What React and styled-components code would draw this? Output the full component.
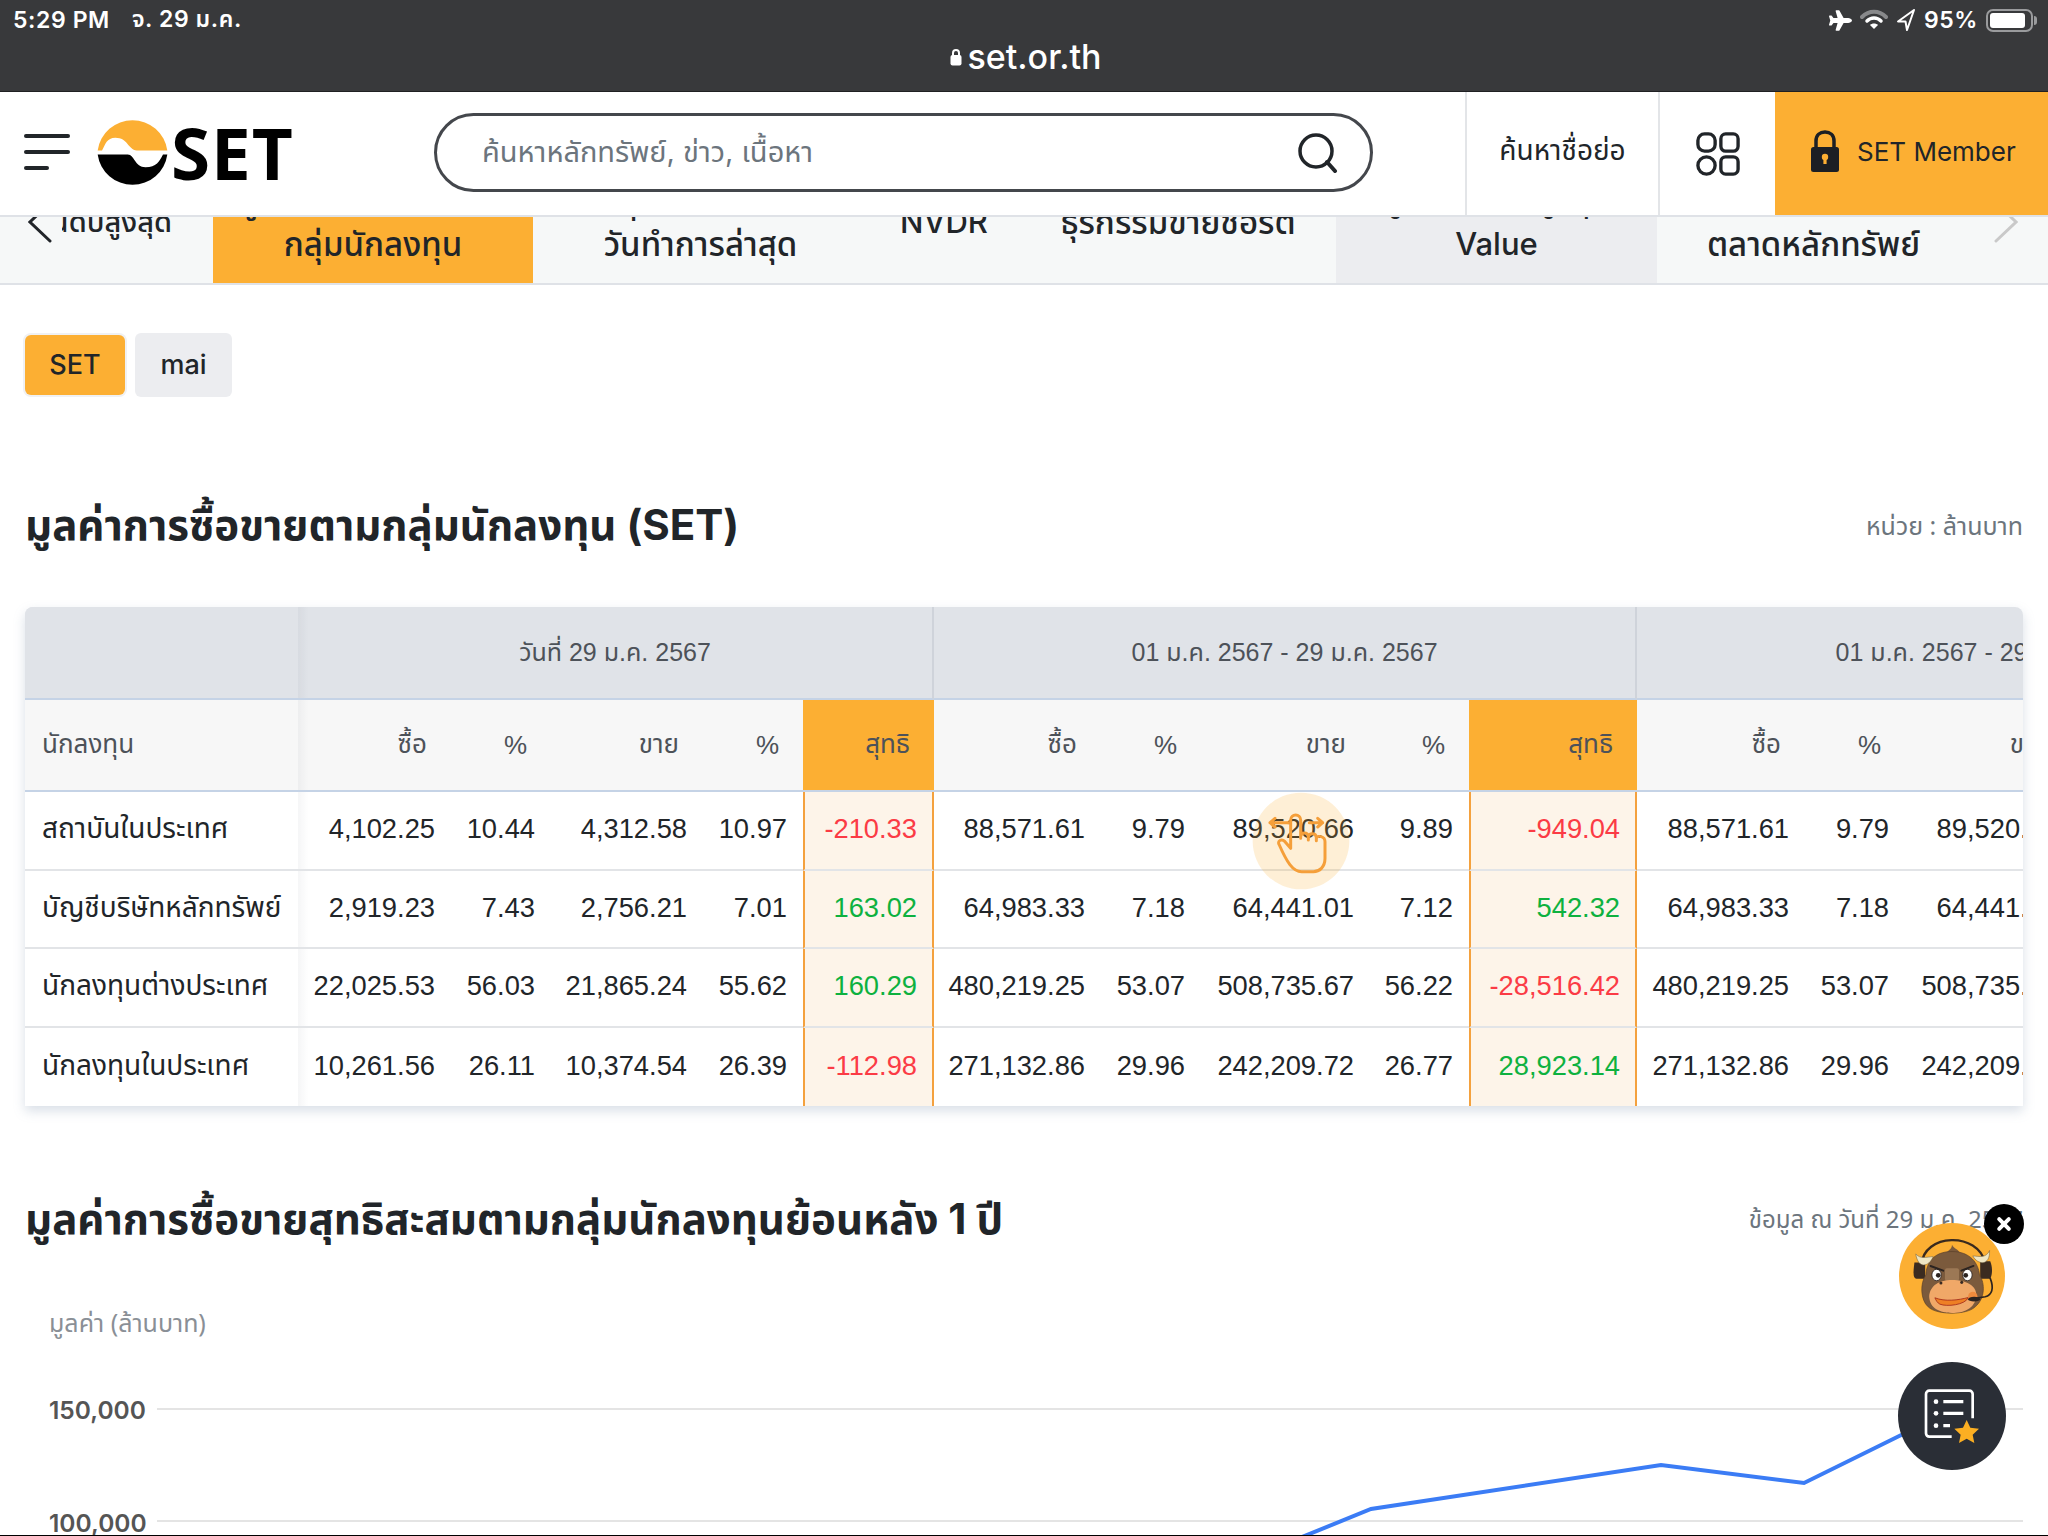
import React from 'react';
import styled, { createGlobalStyle } from 'styled-components';
import { FaPlane } from 'react-icons/fa';

const GlobalStyle = createGlobalStyle`
  html, body { margin: 0; padding: 0; background: #fff; }
  body { font-family: Inter, "Noto Sans Thai", "Noto Sans", sans-serif; color: #212529; }
  * { box-sizing: border-box; }
`;

const ORANGE = '#fcaf33';

const TABS = [
  { w: 320, label: ['20 อันดับสูงสุด'], end: true, size: 29 },
  { w: 320, label: ['มูลค่าการซื้อขายตาม', 'กลุ่มนักลงทุน'], active: true },
  { w: 335, label: ['สรุปการซื้อขาย', 'วันทำการล่าสุด'] },
  { w: 152, label: ['NVDR'], size: 31 },
  { w: 316, label: ['ธุรกรรมขายชอร์ต'] },
  { w: 321, label: ['มูลค่าซื้อขายสูงสุด', 'Value'], muted: true, size: 31 },
  { w: 313, label: ['ภาวะการซื้อขาย', 'ตลาดหลักทรัพย์'] },
];

const COLS = [273, 153, 100, 152, 100, 131, 167, 100, 169, 99, 168, 168, 100, 169, 100, 168];
const TABLE_W = COLS.reduce((a, b) => a + b, 0);

const ROWS = [
  {
    name: 'สถาบันในประเทศ',
    a: ['4,102.25', '10.44', '4,312.58', '10.97', '-210.33'],
    b: ['88,571.61', '9.79', '89,520.66', '9.89', '-949.04'],
  },
  {
    name: 'บัญชีบริษัทหลักทรัพย์',
    a: ['2,919.23', '7.43', '2,756.21', '7.01', '163.02'],
    b: ['64,983.33', '7.18', '64,441.01', '7.12', '542.32'],
  },
  {
    name: 'นักลงทุนต่างประเทศ',
    a: ['22,025.53', '56.03', '21,865.24', '55.62', '160.29'],
    b: ['480,219.25', '53.07', '508,735.67', '56.22', '-28,516.42'],
  },
  {
    name: 'นักลงทุนในประเทศ',
    a: ['10,261.56', '26.11', '10,374.54', '26.39', '-112.98'],
    b: ['271,132.86', '29.96', '242,209.72', '26.77', '28,923.14'],
  },
];

const GROUPS = ['วันที่ 29 ม.ค. 2567', '01 ม.ค. 2567 - 29 ม.ค. 2567', '01 ม.ค. 2567 - 29 ม.ค. 2567'];

const Page = styled.div`
  position: relative;
  width: 2048px;
  height: 1536px;
  overflow: hidden;
  display: flex;
  flex-direction: column;
  background: #fff;
  border-bottom: 1px solid #000;
`;

const BrowserBar = styled.div`
  height: 92px;
  flex: none;
  background: #38393b;
  border-bottom: 1px solid #1f2022;
  color: #fff;
  display: flex;
  flex-direction: column;
`;

const StatusRow = styled.div`
  height: 40px;
  padding: 0 10px 0 13px;
  display: flex;
  justify-content: space-between;
  align-items: center;
  font-size: 23px;
  font-weight: 600;
  letter-spacing: 0.6px;
`;

const StatusGroup = styled.div`
  display: flex;
  align-items: center;
  gap: ${p => p.$gap || 22}px;
`;

const Battery = styled.div`
  width: 47px;
  height: 23px;
  border: 2px solid #9a9b9d;
  border-radius: 7px;
  padding: 2px;
  margin-right: 5px;
  position: relative;
  &::before {
    content: '';
    display: block;
    width: 90%;
    height: 100%;
    background: #fff;
    border-radius: 3px;
  }
  &::after {
    content: '';
    position: absolute;
    right: -6px;
    top: 5px;
    width: 3px;
    height: 9px;
    background: #9a9b9d;
    border-radius: 0 3px 3px 0;
  }
`;

const UrlRow = styled.div`
  display: flex;
  justify-content: center;
  align-items: center;
  gap: 5px;
  padding-left: 4px;
  font-size: 34px;
  font-weight: 500;
  line-height: 34px;
`;

const SiteHeader = styled.header`
  position: relative;
  z-index: 2;
  flex: none;
  height: 125px;
  background: #fff;
  border-bottom: 2px solid #dfe2e7;
  display: flex;
  align-items: stretch;
`;

const Burger = styled.div`
  width: 46px;
  margin: 42px 0 0 24px;
  height: 36px;
  display: flex;
  flex-direction: column;
  justify-content: space-between;
`;

const BurgerLine = styled.span`
  display: block;
  height: 4px;
  border-radius: 2px;
  width: ${p => p.$w}px;
  background: #212529;
`;

const Logo = styled.div`
  display: flex;
  align-items: center;
  margin-left: 27px;
  width: 337px;
  padding-bottom: 3px;
`;

const LogoText = styled.span`
  font-family: "Open Sans", sans-serif;
  font-weight: 700;
  font-size: 71px;
  line-height: 1;
  color: #000;
  margin-left: 3px;
  letter-spacing: 1px;
`;

const Search = styled.div`
  width: 939px;
  height: 79px;
  margin-top: 21px;
  border: 3px solid #44474c;
  border-radius: 40px;
  display: flex;
  align-items: center;
  justify-content: space-between;
  padding: 0 32px 0 45px;
  font-size: 29px;
  color: #6c757d;
`;

const NavCell = styled.div`
  display: flex;
  align-items: center;
  justify-content: center;
  width: ${p => p.$w}px;
  border-left: ${p => (p.$line ? '2px solid #e3e5e8' : 'none')};
  font-size: 28px;
  padding-bottom: ${p => p.$pad || 0}px;
`;

const MemberCell = styled.div`
  flex: 1;
  background: ${ORANGE};
  display: flex;
  align-items: center;
  gap: 17px;
  padding: 0 0 5px 35px;
  font-size: 26px;
  color: #212529;
`;

const TabStrip = styled.nav`
  position: relative;
  z-index: 1;
  flex: none;
  height: 114px;
  margin-top: -46px;
  background: #f6f8f8;
  border-bottom: 2px solid #dfe2e7;
  overflow: hidden;
`;

const TabTrack = styled.div`
  display: flex;
  height: 100%;
  margin-left: -107px;
`;

const Tab = styled.div`
  flex: none;
  width: ${p => p.$w}px;
  display: flex;
  flex-direction: column;
  align-items: ${p => (p.$end ? 'flex-end' : 'center')};
  justify-content: center;
  padding: ${p => (p.$end ? '0 41px 10px 0' : '0 0 10px')};
  font-size: ${p => p.$size || 33}px;
  font-weight: 500;
  line-height: 44px;
  white-space: nowrap;
  background: ${p => (p.$active ? ORANGE : p.$muted ? '#ecedf0' : 'transparent')};
`;

const TabArrow = styled.div`
  position: absolute;
  top: 0;
  bottom: 0;
  width: 62px;
  background: #f6f8f8;
  padding-top: 30px;
  ${p => (p.$side === 'left' ? 'left: 0; padding-left: 28px;' : 'right: 0; padding-left: 8px; background: transparent;')}
`;

const Main = styled.main`
  flex: 1;
  min-height: 0;
  padding: 48px 25px 0;
  display: flex;
  flex-direction: column;
`;

const Markets = styled.div`
  display: flex;
  gap: 10px;
  align-items: center;
`;

const MarketButton = styled.div`
  display: flex;
  align-items: center;
  justify-content: center;
  width: ${p => p.$w}px;
  height: ${p => (p.$active ? 60 : 64)}px;
  padding-bottom: 2px;
  border-radius: 6px;
  font-size: 27px;
  font-weight: 500;
  background: ${p => (p.$active ? ORANGE : '#ecedf0')};
  box-shadow: ${p => (p.$active ? '0 0 0 2px #f0f1f3' : 'none')};
`;

const SectionHead = styled.div`
  display: flex;
  justify-content: space-between;
  align-items: center;
  height: 60px;
  margin-top: ${p => p.$top}px;
`;

const Title = styled.h2`
  margin: 0;
  font-size: 42px;
  font-weight: 700;
  color: #212529;
  white-space: nowrap;
`;

const Note = styled.span`
  font-family: "Noto Sans Thai", "Noto Sans", sans-serif;
  font-size: ${p => p.$size}px;
  color: #6c757d;
  white-space: nowrap;
`;

const TableCard = styled.div`
  margin-top: 50px;
  height: 499px;
  flex: none;
  border-radius: 8px 8px 0 0;
  overflow: hidden;
  box-shadow: 0 5px 12px rgba(120, 140, 170, 0.28);
`;

const Table = styled.table`
  width: ${TABLE_W}px;
  table-layout: fixed;
  border-collapse: separate;
  border-spacing: 0;
  font-family: "Liberation Sans", "Noto Sans Thai", sans-serif;
  font-size: 27.3px;
`;

const StickyCell = styled.td`
  position: sticky;
  left: 0;
  z-index: 1;
  background: inherit;
  text-align: left;
  padding-left: 17px;
  white-space: nowrap;
  &::after {
    content: '';
    position: absolute;
    top: 0;
    bottom: 0;
    right: -10px;
    width: 10px;
    background: linear-gradient(to right, rgba(60, 70, 90, 0.05), rgba(60, 70, 90, 0));
  }
`;

const NameCell = styled(StickyCell)`
  font-size: 28px;
  padding-bottom: 2px;
`;

const GroupRow = styled.tr`
  height: 93px;
  background: #e0e3e8;
  td {
    border-bottom: 2px solid #c5d3e6;
  }
`;

const GroupCell = styled.td`
  text-align: center;
  color: #4d5259;
  font-size: 25px;
  border-right: 2px solid #cfd3da;
  white-space: nowrap;
  overflow: hidden;
`;

const LabelRow = styled.tr`
  height: 92px;
  background: #f7f7f7;
  color: #4d5259;
  font-size: 26px;
  td {
    border-bottom: 2px solid #c5d3e6;
  }
`;

const LabelCell = styled.td`
  text-align: right;
  padding-right: 24px;
  white-space: nowrap;
  ${p => p.$net && `background: ${ORANGE};`}
`;

const DataRow = styled.tr`
  height: 78.5px;
  background: #fff;
  td {
    border-bottom: 2px solid #e2e4e7;
  }
  &:last-child td {
    border-bottom: none;
  }
`;

const NumCell = styled.td`
  text-align: right;
  padding: 0 16px 2px 0;
  white-space: nowrap;
  overflow: hidden;
`;

const NetCell = styled.td`
  text-align: right;
  padding: 0 15px 2px 0;
  white-space: nowrap;
  background: #fdf4e9;
  border-left: 2px solid #f4a13e;
  border-right: 2px solid #f4a13e;
  color: ${p => (p.$neg ? '#fb3b45' : '#0eb13f')};
`;

const ChartLabel = styled.div`
  margin: 54px 0 0 24px;
  font-family: "Noto Sans Thai", sans-serif;
  font-size: 25px;
  color: #8a8f96;
  white-space: nowrap;
`;

const ChartSvg = styled.svg`
  display: block;
  width: 1998px;
  height: 220px;
  flex: none;
`;

const SwipeHint = styled.svg`
  position: absolute;
  left: 1220px;
  top: 780px;
  pointer-events: none;
`;

const FloatCircle = styled.div`
  position: absolute;
  left: ${p => p.$x - p.$r}px;
  top: ${p => p.$y - p.$r}px;
  width: ${p => p.$r * 2}px;
  height: ${p => p.$r * 2}px;
  border-radius: 50%;
  background: ${p => p.$bg};
  display: flex;
  align-items: center;
  justify-content: center;
`;

const StatusIcons = () => (
  <>
    <FaPlane size={23} color="#fff" />
    <svg width="28" height="24" viewBox="0 0 28 24" fill="none" strokeLinecap="round">
      <path d="M2 9C9 2 19 2 26 9" stroke="#88898b" strokeWidth="4" />
      <path d="M7 13C11 9 17 9 21 13" stroke="#fff" strokeWidth="3.5" />
      <path d="M14 21L10 17C12 15 16 15 18 17Z" fill="#fff" />
    </svg>
    <svg width="20" height="24" viewBox="0 0 20 24" fill="none">
      <path d="M18 2L2 13.5H9.5L11 22Z" stroke="#fff" strokeWidth="2" strokeLinejoin="round" />
    </svg>
  </>
);

const LogoMark = () => (
  <svg width="71" height="71" viewBox="293 53 212 212">
    <path d="M295 153A105 105 0 0 1 503 153L412 153C385 150 385 115 348 115C322 115 318 135 308 153Z" fill="#fcaf33" />
    <path d="M295 165L385 165C405 165 405 203 438 203C470 203 480 185 490 165L503 165A105 105 0 0 1 295 165Z" fill="#000" />
  </svg>
);

const SearchIcon = () => (
  <svg width="40" height="40" viewBox="0 0 40 40" fill="none" stroke="#212529" strokeLinecap="round">
    <circle cx="18" cy="18" r="16" strokeWidth="3.5" />
    <path d="M29 29L37 38" strokeWidth="4" />
  </svg>
);

const GridIcon = () => (
  <svg width="44" height="44" viewBox="0 0 46 46" fill="none" stroke="#212529" strokeWidth="3.5">
    <rect x="2" y="2" width="18" height="18" rx="7" />
    <rect x="26" y="2" width="18" height="18" rx="5" />
    <rect x="2" y="26" width="18" height="18" rx="9" />
    <rect x="26" y="26" width="18" height="18" rx="5" />
  </svg>
);

const LockIcon = () => (
  <svg width="30" height="42" viewBox="0 0 30 42">
    <path d="M6 20V11C6 5 10 2 15 2C20 2 24 5 24 11V20" fill="none" stroke="#1c1f24" strokeWidth="3.5" />
    <rect x="1" y="17" width="28" height="25" rx="2.5" fill="#1c1f24" />
    <circle cx="15" cy="27" r="3.2" fill="#fcaf33" />
    <rect x="13.4" y="27" width="3.2" height="7" fill="#fcaf33" />
  </svg>
);

const Cow = () => (
  <svg width="106" height="106" viewBox="28 70 316 316">
    <path d="M95 195C100 100 265 95 285 190" fill="none" stroke="#3a2a1e" strokeWidth="7" />
    <path d="M74 188H106V236H80C72 236 70 225 72 205Z" fill="#3b2b20" />
    <path d="M270 184H300C307 200 307 225 300 236H270Z" fill="#3b2b20" />
    <path d="M170 160C175 150 185 150 186 135C192 148 205 148 210 160Z" fill="#7b5a3c" />
    <path d="M186 155C130 155 110 190 108 225C90 250 92 300 115 320C140 345 230 345 255 320C285 295 285 250 268 225C265 190 240 155 186 155Z" fill="#7b5a3c" stroke="#5a3f28" strokeWidth="2" />
    <path d="M78 162C90 178 110 172 130 170C118 200 85 210 78 162Z" fill="#efe6c4" stroke="#6b5a3c" strokeWidth="1.5" />
    <path d="M298 152C288 175 268 170 248 168C262 195 300 200 298 152Z" fill="#efe6c4" stroke="#6b5a3c" strokeWidth="1.5" />
    <rect x="165" y="205" width="42" height="38" rx="6" fill="#9c7855" />
    <path d="M118 290C120 255 150 240 186 240C225 240 262 255 258 288C255 325 220 338 186 338C150 338 120 325 118 290Z" fill="#f0a868" />
    <ellipse cx="140" cy="225" rx="14" ry="17" fill="#fff" stroke="#2b2320" strokeWidth="2.5" />
    <ellipse cx="232" cy="225" rx="14" ry="17" fill="#fff" stroke="#2b2320" strokeWidth="2.5" />
    <circle cx="145" cy="226" r="7" fill="#2b2320" />
    <circle cx="227" cy="226" r="7" fill="#2b2320" />
    <path d="M122 198L160 212M250 198L214 212" stroke="#2b2320" strokeWidth="6" strokeLinecap="round" />
    <circle cx="153" cy="249" r="4.5" fill="#3a2a22" />
    <circle cx="215" cy="247" r="4.5" fill="#3a2a22" />
    <path d="M135 293C165 305 205 300 235 292C225 315 170 320 150 312C142 308 138 300 135 293Z" fill="#ee7f24" stroke="#a32a1a" strokeWidth="2.5" />
    <circle cx="248" cy="289" r="14" fill="#ef8a3d" />
    <path d="M300 235C312 265 305 285 285 290L240 297" fill="none" stroke="#2b2320" strokeWidth="5" strokeLinecap="round" />
    <ellipse cx="252" cy="297" rx="18" ry="7" fill="#2b2320" />
  </svg>
);

const FavIcon = () => (
  <svg width="108" height="108" viewBox="744 576 324 324" fill="none">
    <path d="M968 745V672A10 10 0 0 0 958 662H838A10 10 0 0 0 828 672V790A10 10 0 0 0 838 800H905" stroke="#fff" strokeWidth="8" />
    <circle cx="858" cy="695" r="7" fill="#fff" />
    <circle cx="858" cy="730" r="7" fill="#fff" />
    <circle cx="858" cy="767" r="7" fill="#fff" />
    <path d="M880 695H940M880 730H940M880 767H900" stroke="#fff" strokeWidth="10" />
    <path d="M950 750L961 773L987 776L968 794L973 819L950 806L927 819L932 794L913 776L939 773Z" fill="#fcaf22" />
  </svg>
);

const Row = ({ row }) => (
  <DataRow>
    <NameCell>{row.name}</NameCell>
    {[row.a, row.b, row.b].map((vals, g) =>
      vals.map((v, i) =>
        i === 4 ? (
          <NetCell key={`${g}${i}`} $neg={v.startsWith('-')}>{v}</NetCell>
        ) : (
          <NumCell key={`${g}${i}`}>{v}</NumCell>
        )
      )
    )}
  </DataRow>
);

export default function App() {
  return (
    <>
      <GlobalStyle />
      <Page>
        <BrowserBar>
          <StatusRow>
            <StatusGroup>
              <span>5:29 PM</span>
              <span>จ. 29 ม.ค.</span>
            </StatusGroup>
            <StatusGroup $gap={8}>
              <StatusIcons />
              <span>95%</span>
              <Battery />
            </StatusGroup>
          </StatusRow>
          <UrlRow>
            <svg width="12" height="18" viewBox="0 0 12 18">
              <path d="M3 8V5C3 1 9 1 9 5V8" fill="none" stroke="#fff" strokeWidth="2" />
              <rect x="0.5" y="7" width="11" height="10.5" rx="2" fill="#fff" />
            </svg>
            <span>set.or.th</span>
          </UrlRow>
        </BrowserBar>

        <SiteHeader>
          <Burger>
            <BurgerLine $w={46} />
            <BurgerLine $w={46} />
            <BurgerLine $w={25} />
          </Burger>
          <Logo>
            <LogoMark />
            <LogoText>SET</LogoText>
          </Logo>
          <Search>
            <span>ค้นหาหลักทรัพย์, ข่าว, เนื้อหา</span>
            <SearchIcon />
          </Search>
          <NavCell $w={92} />
          <NavCell $w={193} $line $pad={5}>ค้นหาชื่อย่อ</NavCell>
          <NavCell $w={117} $line><GridIcon /></NavCell>
          <MemberCell>
            <LockIcon />
            <span>SET Member</span>
          </MemberCell>
        </SiteHeader>

        <TabStrip>
          <TabTrack>
            {TABS.map(t => (
              <Tab key={t.label.join()} $w={t.w} $active={t.active} $muted={t.muted} $end={t.end} $size={t.size}>
                {t.label.map(l => <span key={l}>{l}</span>)}
              </Tab>
            ))}
          </TabTrack>
          <TabArrow $side="left">
            <svg width="24" height="44" viewBox="0 0 24 44" fill="none" stroke="#212529" strokeWidth="3" strokeLinecap="round">
              <path d="M22 2L2 21L22 40" />
            </svg>
          </TabArrow>
          <TabArrow $side="right">
            <svg width="24" height="44" viewBox="0 0 24 44" fill="none" stroke="#c9c9c9" strokeWidth="3" strokeLinecap="round">
              <path d="M2 2L22 21L2 40" />
            </svg>
          </TabArrow>
        </TabStrip>

        <Main>
          <Markets>
            <MarketButton $w={100} $active>SET</MarketButton>
            <MarketButton $w={97}>mai</MarketButton>
          </Markets>

          <SectionHead $top={100}>
            <Title>มูลค่าการซื้อขายตามกลุ่มนักลงทุน (SET)</Title>
            <Note $size={25}>หน่วย : ล้านบาท</Note>
          </SectionHead>

          <TableCard>
            <Table>
              <colgroup>
                {COLS.map((w, i) => <col key={i} width={w} />)}
              </colgroup>
              <tbody>
                <GroupRow>
                  <StickyCell />
                  <GroupCell colSpan={5}>{GROUPS[0]}</GroupCell>
                  <GroupCell colSpan={5}>{GROUPS[1]}</GroupCell>
                  <GroupCell colSpan={5}>{GROUPS[2]}</GroupCell>
                </GroupRow>
                <LabelRow>
                  <StickyCell>นักลงทุน</StickyCell>
                  {[0, 1, 2].map(g =>
                    ['ซื้อ', '%', 'ขาย', '%', 'สุทธิ'].map((l, i) => (
                      <LabelCell key={`${g}${i}`} $net={i === 4}>{l}</LabelCell>
                    ))
                  )}
                </LabelRow>
                {ROWS.map(r => <Row key={r.name} row={r} />)}
              </tbody>
            </Table>
          </TableCard>

          <SectionHead $top={85}>
            <Title>มูลค่าการซื้อขายสุทธิสะสมตามกลุ่มนักลงทุนย้อนหลัง 1 ปี</Title>
            <Note $size={24}>ข้อมูล ณ วันที่ 29 ม.ค. 2567</Note>
          </SectionHead>

          <ChartLabel>มูลค่า (ล้านบาท)</ChartLabel>
          <ChartSvg viewBox="25 1342 1998 220">
            <path d="M157 1408H2023M157 1520H2023" stroke="#e4e4e4" strokeWidth="2" />
            <text x="49" y="1418" fontSize="24.5" fontWeight="600" fill="#555">150,000</text>
            <text x="49" y="1531" fontSize="24.5" fontWeight="600" fill="#555">100,000</text>
            <path d="M1302 1536L1371 1508L1661 1464L1804 1482L1960 1405" fill="none" stroke="#3b7cf5" strokeWidth="4" />
          </ChartSvg>
        </Main>

        <SwipeHint width="200" height="120" viewBox="0 0 600 360">
          <circle cx="243" cy="183" r="145" fill="#fcaf33" fillOpacity="0.2" />
          <g fill="none" stroke="#f59f3a" strokeWidth="9" strokeLinecap="round" strokeLinejoin="round">
            <path d="M178 195C170 182 185 175 195 185L212 205V120C212 100 242 100 242 120V175M242 170C243 155 265 155 265 170V180M265 172C266 158 288 158 289 172V182M289 175C292 165 315 168 315 185V235C315 262 298 275 280 275H245C218 275 200 245 178 195" />
            <path d="M205 128H150M150 128L165 115M150 128L165 141" />
            <path d="M268 128H308M308 128L293 115M308 128L293 141" />
          </g>
        </SwipeHint>

        <FloatCircle $x={2004} $y={1224} $r={20} $bg="#000">
          <svg width="16" height="16" viewBox="0 0 20 20" stroke="#fff" strokeWidth="5" strokeLinecap="round">
            <path d="M4 4L16 16M16 4L4 16" />
          </svg>
        </FloatCircle>
        <FloatCircle $x={1952} $y={1276} $r={53} $bg={ORANGE}>
          <Cow />
        </FloatCircle>
        <FloatCircle $x={1952} $y={1416} $r={54} $bg="#2a2e36">
          <FavIcon />
        </FloatCircle>
      </Page>
    </>
  );
}
